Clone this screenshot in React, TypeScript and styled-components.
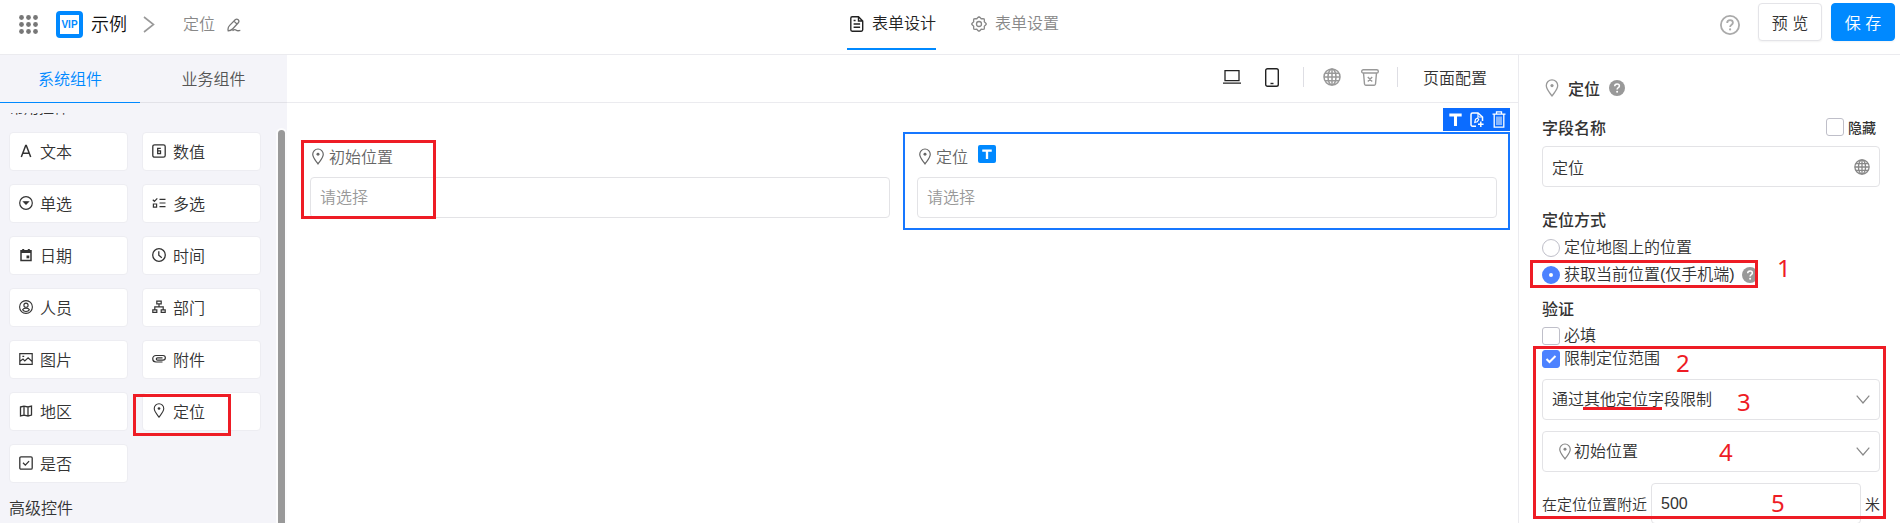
import React from "react";
import styled, { createGlobalStyle, css } from "styled-components";

const GlobalStyle = createGlobalStyle`
  * { box-sizing: border-box; }
  html, body { margin: 0; padding: 0; }
  body, button, input, select {
    font-family: "Liberation Sans", "Noto Sans CJK SC", sans-serif;
    font-size: 16px;
    font-weight: 350;
    color: #333;
  }
  button { cursor: pointer; padding: 0; border: 0; background: none; }
  h1, h2, h3, p { margin: 0; }
  svg { display: block; flex: none; }
`;

/* ---------- icons ---------- */

const Icon = ({
  w = 16,
  h,
  box = "0 0 16 16",
  sw = 1.3,
  children,
}: {
  w?: number;
  h?: number;
  box?: string;
  sw?: number;
  children: React.ReactNode;
}) => (
  <svg
    width={w}
    height={h ?? w}
    viewBox={box}
    fill="none"
    stroke="currentColor"
    strokeWidth={sw}
    aria-hidden="true"
  >
    {children}
  </svg>
);

const AppsIcon = () => (
  <Icon w={19} box="0 0 19 19">
    {[2.5, 9.5, 16.5].map((y) =>
      [2.5, 9.5, 16.5].map((x) => (
        <circle key={`${x}-${y}`} cx={x} cy={y} r="2.4" fill="currentColor" stroke="none" />
      ))
    )}
  </Icon>
);

const PinIcon = ({ w = 12, h = 17 }: { w?: number; h?: number }) => (
  <Icon w={w} h={h} box="0 0 13 18">
    <path d="M6.5 17C4.2 13.6.8 10.5.8 6.6a5.7 5.7 0 0 1 11.4 0c0 3.9-3.4 7-5.700 10.400Z" />
    <circle cx="6.5" cy="6.600" r="1.600" fill="currentColor" stroke="none" />
  </Icon>
);

const GlobeIcon = ({ size = 18 }: { size?: number }) => (
  <Icon w={size} box="0 0 18 18" sw={1.5}>
    <circle cx="9" cy="9" r="8" />
    <ellipse cx="9" cy="9" rx="4" ry="8" />
    <path d="M9 1v16M1 9h16M2 5.2h14M2 12.8h14" />
  </Icon>
);

const QuestionIcon = ({ size = 16 }: { size?: number }) => (
  <Icon w={size}>
    <circle cx="8" cy="8" r="8" fill="#999" stroke="none" />
    <path d="M5.7 6.3c0-1.4 1-2.3 2.4-2.3s2.3.9 2.3 2c0 1.6-2.3 1.7-2.3 3.4" stroke="#fff" strokeWidth="1.5" />
    <circle cx="8.1" cy="11.8" r="1" fill="#fff" stroke="none" />
  </Icon>
);

const HelpIcon = () => (
  <Icon w={20} box="0 0 20 20" sw={1.8}>
    <circle cx="10" cy="10" r="9.1" />
    <path d="M7.2 8c0-1.7 1.2-2.8 2.9-2.8s2.8 1.1 2.8 2.500c0 2-2.800 2-2.800 4.300" />
    <circle cx="10.1" cy="14.4" r="1.1" fill="currentColor" stroke="none" />
  </Icon>
);

const ChevronRight = () => (
  <Icon w={12} h={17} box="0 0 12 17" sw={1.6}>
    <path d="M1 1l9.500 7.500L1 16" stroke="#999" />
  </Icon>
);

const ChevronDown = () => (
  <Icon w={14} h={9} box="0 0 14 9" sw={1.2}>
    <path d="M.7.7L7 8l6.300-7.300" />
  </Icon>
);

const EditIcon = () => (
  <Icon w={14} box="0 0 14 14" sw={1.3}>
    <path d="M1.200 12.800c-.500-2 .1-4 1.500-5.400L8.200 1.700a2.200 2.200 0 0 1 3.100 3.100L5.800 10.700c-1.200 1.300-2.800 2-4.600 2.100ZM7.400 3.600l2.300 2.200M5.500 12.800c1.600-1.400 2.800-1.400 3.800-.600.800.7 2.200.7 4 .2" />
  </Icon>
);

const DocIcon = () => (
  <Icon w={14} h={16} box="0 0 14 16" sw={1.4}>
    <path d="M8.500.8H2.200C1.400.8.8 1.400.8 2.200v11.600c0 .8.6 1.400 1.400 1.400h9.100c.8 0 1.400-.6 1.400-1.400V5L8.500.8ZM8.500.8V5h4.200M3.600 4.500h2M3.600 8h6.500M3.600 11.300h6.500" />
  </Icon>
);

const gearOutline = Array.from({ length: 32 }, (_, i) => {
  const angle = (i / 32) * Math.PI * 2;
  const radius = 6.5 + 0.8 * Math.cos(angle * 8);
  return `${i ? "L" : "M"}${(8 + radius * Math.cos(angle)).toFixed(2)} ${(
    8 +
    radius * Math.sin(angle)
  ).toFixed(2)}`;
}).join("");

const GearIcon = () => (
  <Icon w={16} sw={1.3}>
    <path d={`${gearOutline}Z`} strokeLinejoin="round" />
    <circle cx="8" cy="8" r="2.500" />
  </Icon>
);

const LaptopIcon = () => (
  <Icon w={18} h={14} box="0 0 18 14" sw={1.3}>
    <path d="M2 .7h14v10H2ZM0 13.200h18" />
  </Icon>
);

const PhoneIcon = () => (
  <Icon w={14} h={19} box="0 0 14 19" sw={1.4}>
    <rect x=".7" y=".7" width="12.600" height="17.600" rx="1.800" />
    <path d="M5.500 15.500h3" />
  </Icon>
);

const RecycleIcon = () => (
  <Icon w={18} h={17} box="0 0 18 17" sw={1.4}>
    <rect x=".7" y=".7" width="16.600" height="3.300" rx="1.600" />
    <path d="M2.500 4l1 11c.1.8.5 1.200 1.200 1.200h8.600c.7 0 1.100-.4 1.200-1.200l1-11M6.800 8l4.400 4.400M11.200 8l-4.400 4.400" />
  </Icon>
);

const CopyIcon = () => (
  <Icon w={14} h={16} box="0 0 14 16" sw={1.5}>
    <path d="M6 14.200H2.500A1.500 1.500 0 0 1 1 12.700V2.500A1.500 1.500 0 0 1 2.500 1H8l4.500 4v4" />
    <path d="M8 1v4h4M4.800 10.500l.7-3.200 2-1.300 1.200 1.500-1.500 2.300Z" strokeWidth="1.200" />
    <path d="M10.800 9.500v5.500M8 12.300h5.600" strokeWidth="1.500" />
  </Icon>
);

const TrashIcon = () => (
  <Icon w={14} h={17} box="0 0 14 17" sw={1.3}>
    <path d="M.5 3.200h13M4.500 3V.8h5V3M2.200 3.500v12.700h9.600V3.500" />
    <path d="M5 5.500v8.500M7 5.500v8.500M9 5.500v8.500" strokeWidth="1" />
  </Icon>
);

const LetterTIcon = ({ size = 13 }: { size?: number }) => (
  <Icon w={size} box="0 0 12 12" sw={2.8}>
    <path d="M.3 1.900h11.400M6 1.500V12" />
  </Icon>
);

const LetterAIcon = () => (
  <Icon w={14} box="0 0 14 14" sw={1.5}>
    <path d="M2.300 13 6.700 1.500h.6L11.700 13M3.700 9.300h6.600" />
  </Icon>
);
const NumberIcon = () => (
  <Icon w={14} box="0 0 14 14" sw={1.3}>
    <rect x=".8" y=".8" width="12.400" height="12.400" rx="1.800" />
    <path d="M8.800 4.300H5.700v5.300h2.800V6.900H5.700" />
  </Icon>
);
const RadioIcon = () => (
  <Icon w={14} box="0 0 14 14" sw={1.2}>
    <circle cx="7" cy="7" r="6.300" />
    <path d="M4.700 5.800h4.600L7 8.200Z" fill="currentColor" />
  </Icon>
);
const ChecksIcon = () => (
  <Icon w={14} box="0 0 14 14" sw={1.2}>
    <path d="M.8 3.800l1.600 1.500L5.300 2.300M1.400 8h3.200v3.200H1.400ZM7.500 3.300h6M7.500 7h6M7.500 10.700h6" />
  </Icon>
);
const DateIcon = () => (
  <Icon w={14} box="0 0 14 14" sw={1.5}>
    <path d="M2 2.800h10v9.700H2Z" />
    <path d="M2 4h10M4.200 1v2.500M9.800 1v2.500" strokeWidth="2" />
    <path d="M7.500 7.500h2.800v2.800H7.500Z" fill="currentColor" stroke="none" />
  </Icon>
);
const ClockIcon = () => (
  <Icon w={14} box="0 0 14 14" sw={1.3}>
    <circle cx="7" cy="7" r="6.300" />
    <path d="M6.800 3.300v4l3 2.400" />
  </Icon>
);
const PersonIcon = () => (
  <Icon w={14} box="0 0 14 14" sw={1.1}>
    <circle cx="7" cy="7" r="6.400" />
    <circle cx="7" cy="5.200" r="2.100" />
    <path d="M3.600 9.700c.7-1.200 2-1.600 3.400-1.600s2.700.4 3.400 1.600c-.6 1.300-2 1.800-3.400 1.800s-2.800-.5-3.400-1.800Z" />
  </Icon>
);
const DeptIcon = () => (
  <Icon w={14} box="0 0 14 14" sw={1.2}>
    <path d="M4.800 1.200h4.400v2.600H4.800ZM.8 9.800h4v2.600h-4ZM9.200 9.800h4v2.600h-4ZM7 3.800v3M2.800 9.800v-3h8.400v3" />
  </Icon>
);
const ImageIcon = () => (
  <Icon w={14} box="0 0 14 14" sw={1.2}>
    <path d="M.8 1.600h12.400v10.800H.8ZM1 9.300l3-2.300 1.800 2 3.300-3.200 4 3.700M3.400 4.300h1.800" />
  </Icon>
);
const ClipIcon = () => (
  <Icon w={14} box="0 0 14 14" sw={1.2}>
    <path d="M10.500 10H4a3.200 3.200 0 0 1 0-6.500h7a2.300 2.300 0 0 1 0 4.700H5.500a1.200 1.200 0 0 1 0-2.400h5" />
  </Icon>
);
const MapIcon = () => (
  <Icon w={14} box="0 0 14 14" sw={1.3}>
    <path d="M1.500 3l3.500-.9 4 .9 3.500-.9v9L9 12l-4-.9-3.500.9ZM5 2.100v9M9 3v9" />
  </Icon>
);
const YesNoIcon = () => (
  <Icon w={14} box="0 0 14 14" sw={1.3}>
    <rect x=".8" y=".8" width="12.400" height="12.400" rx="1.200" />
    <path d="M4 6.800l2.300 2.300 3.800-4" />
  </Icon>
);

/* ---------- annotations laid over the interface ---------- */

type Box = { $x: number; $y: number; $w: number; $h: number };

const MarkBox = styled.span<Box>`
  position: absolute;
  left: ${(p) => p.$x}px;
  top: ${(p) => p.$y}px;
  width: ${(p) => p.$w}px;
  height: ${(p) => p.$h}px;
  border: 3px solid #ee1c25;
  pointer-events: none;
`;

const MarkLine = styled.span`
  position: absolute;
  left: 41px;
  top: 28px;
  width: 79px;
  height: 3px;
  background: #ee1c25;
`;

const MarkNumber = styled.span<{ $x: number; $y: number }>`
  position: absolute;
  left: ${(p) => p.$x}px;
  top: ${(p) => p.$y}px;
  font-family: "Noto Sans", sans-serif;
  font-size: 24px;
  font-weight: 400;
  line-height: 24px;
  color: #ee1c25;
  pointer-events: none;
`;

/* ---------- page frame ---------- */

const Page = styled.div`
  display: flex;
  flex-direction: column;
  height: 100vh;
  overflow: hidden;
  background: #fff;
`;

const Header = styled.header`
  display: grid;
  grid-template-columns: 1fr auto 1fr;
  flex: none;
  height: 55px;
  border-bottom: 1px solid #ebebef;
`;

const Brand = styled.div`
  display: flex;
  align-items: center;
  height: 49px;
  padding-left: 19px;
  color: #777;
`;

const Logo = styled.span`
  display: flex;
  align-items: center;
  justify-content: center;
  width: 27px;
  height: 27px;
  margin: 0 8px 0 18px;
  border: 4px solid #0089ff;
  border-radius: 4px;
  background: #fff;
  color: #0089ff;
  font-size: 10px;
  font-weight: 700;
`;

const AppName = styled.h1`
  margin-right: 16px;
  font-size: 18px;
  font-weight: 350;
  line-height: 24px;
  color: #111;
`;

const Crumb = styled.span`
  margin: 0 12px 0 28px;
  line-height: 24px;
  color: #888;
`;

const IconButton = styled.button`
  display: flex;
  color: inherit;
`;

const MainTabs = styled.nav`
  display: flex;
  gap: 32px;
  padding-left: 6px;
`;

const MainTab = styled.a<{ $active?: boolean }>`
  display: flex;
  align-items: center;
  gap: 8px;
  height: 50px;
  padding-left: 3px;
  border-bottom: 2px solid ${(p) => (p.$active ? "#0089ff" : "transparent")};
  color: ${(p) => (p.$active ? "#222" : "#888")};
  line-height: 24px;
  text-decoration: none;
`;

const Actions = styled.div`
  display: flex;
  justify-content: flex-end;
  gap: 9px;
  padding: 3px 5px 0 0;
`;

const HelpButton = styled(IconButton)`
  align-items: center;
  height: 44px;
  margin-right: 9px;
  color: #aaa;
`;

const ActionButton = styled.button<{ $primary?: boolean }>`
  width: 64px;
  height: 38px;
  border: 1px solid #e4e4e8;
  border-radius: 4px;
  background: #fff;
  box-shadow: 0 1px 2px rgba(0, 0, 0, 0.05);
  ${(p) =>
    p.$primary &&
    css`
      border-color: #0089ff;
      background: #0089ff;
      color: #fff;
    `}
`;

const Body = styled.div`
  display: flex;
  flex: 1;
  min-height: 0;
`;

/* ---------- left sidebar ---------- */

const Sidebar = styled.aside`
  display: flex;
  flex-direction: column;
  flex: none;
  width: 287px;
  background: #f4f4f9;
`;

const SideTabs = styled.div`
  display: grid;
  grid-template-columns: 140px 1fr;
  flex: none;
`;

const SideTab = styled.button<{ $active?: boolean }>`
  height: 48px;
  padding-bottom: 2px;
  border-bottom: 1px solid ${(p) => (p.$active ? "#0089ff" : "#e2e2e8")};
  color: ${(p) => (p.$active ? "#0089ff" : "#555")};
`;

const SideScroll = styled.div`
  display: flex;
  flex: 1;
  justify-content: space-between;
  min-height: 0;
  overflow: hidden;
  padding-top: 10px;
`;

const Palette = styled.div`
  padding-left: 9px;
`;

const ClippedTitle = styled.p`
  display: flex;
  align-items: flex-end;
  height: 3px;
  overflow: hidden;
  font-size: 15px;
  line-height: 16px;
`;

const Cards = styled.div`
  display: grid;
  grid-template-columns: 119px 119px;
  gap: 13px 14px;
  margin-top: 16px;
`;

const Card = styled.button`
  position: relative;
  display: flex;
  align-items: center;
  gap: 7px;
  height: 39px;
  padding: 0 0 2px 9px;
  border: 1px solid #ededf2;
  border-radius: 4px;
  background: #fff;
`;

const GroupTitle = styled.p`
  margin-top: 14px;
  line-height: 24px;
`;

const Track = styled.div`
  display: flex;
  width: 11px;
  margin-top: 15px;
  padding: 2px 2px 0;
  border-radius: 6px 6px 0 0;
  background: #fcfcfd;
`;

const Thumb = styled.div`
  flex: 1;
  border-radius: 4px 4px 0 0;
  background: #999;
`;

/* ---------- canvas ---------- */

const Canvas = styled.main`
  flex: 1;
  min-width: 0;
`;

const Toolbar = styled.div`
  display: flex;
  align-items: center;
  justify-content: flex-end;
  height: 48px;
  padding: 0 31px 3px 0;
  border-bottom: 1px solid #ebebef;
`;

const ToolGroup = styled.div<{ $muted?: boolean }>`
  display: flex;
  align-items: center;
  gap: ${(p) => (p.$muted ? 20 : 24)}px;
  padding: 0 ${(p) => (p.$muted ? 18 : 24)}px 0 ${(p) => (p.$muted ? 19 : 24)}px;
  border-right: 1px solid #dedee4;
  height: 20px;
  color: ${(p) => (p.$muted ? "#999" : "#222")};
`;

const ConfigButton = styled.button`
  padding-left: 25px;
`;

const Fields = styled.div`
  display: grid;
  grid-template-columns: 1fr 1fr;
  padding: 29px 8px 0 9px;
`;

const Field = styled.section<{ $selected?: boolean }>`
  position: relative;
  height: 98px;
  padding: 10px 11px 0 12px;
  border: 2px solid ${(p) => (p.$selected ? "#1677ff" : "transparent")};
`;

const FieldLabel = styled.label`
  display: flex;
  align-items: center;
  gap: 5px;
  height: 24px;
  padding-left: 2px;
  color: #666;
`;

const Badge = styled.span`
  display: flex;
  align-items: center;
  justify-content: center;
  width: 18px;
  height: 18px;
  margin: 0 0 4px 5px;
  border-radius: 2px;
  background: #0089ff;
  color: #fff;
`;

const TextBox = styled.input`
  width: 100%;
  height: 41px;
  padding: 0 9px;
  border: 1px solid #e3e3e6;
  border-radius: 4px;
  background: #fff;
  outline: none;
  &::placeholder {
    color: #999;
    opacity: 1;
  }
`;

const FieldInput = styled(TextBox)`
  display: block;
  margin-top: 9px;
`;

const FieldTools = styled.div`
  position: absolute;
  right: -2px;
  top: -26px;
  display: flex;
  align-items: center;
  justify-content: space-between;
  width: 67px;
  height: 23px;
  padding: 0 4px 0 6px;
  background: #0b6cff;
  color: #fff;
`;

/* ---------- property panel ---------- */

const Panel = styled.aside`
  flex: none;
  width: 382px;
  padding: 21px 20px 0 23px;
  border-left: 1px solid #ebebef;
`;

const PanelTitle = styled.h2`
  display: flex;
  align-items: center;
  gap: 9px;
  height: 24px;
  padding-left: 3px;
  font-size: 16px;
  font-weight: 500;
`;

const Muted = styled.span`
  display: flex;
  color: #999;
`;

const LabelRow = styled.div`
  display: flex;
  align-items: center;
  justify-content: space-between;
  height: 24px;
  margin: 15px 0 7px;
`;

const Strong = styled.label`
  font-weight: 500;
`;

const HideOption = styled.label`
  display: flex;
  align-items: center;
  gap: 4px;
  margin-right: 4px;
  font-size: 14px;
  font-weight: 500;
`;

const Group = styled.div`
  position: relative;
`;

const GroupHeading = styled.h3<{ $gap: number }>`
  padding: ${(p) => p.$gap}px 0 2px;
  font-size: 16px;
  line-height: 24px;
  font-weight: 500;
`;

const Option = styled.label<{ $h: number }>`
  display: flex;
  align-items: center;
  gap: 4px;
  height: ${(p) => p.$h}px;
  line-height: 22px;
`;

const Check = styled.input`
  appearance: none;
  flex: none;
  width: 18px;
  height: 18px;
  margin: 0;
  border: 1px solid #bfbfc9;
  border-radius: 3px;
  background: #fff;
  &:checked {
    border-color: #4d82ff;
    background: #4d82ff
      url("data:image/svg+xml,%3Csvg xmlns='http://www.w3.org/2000/svg' viewBox='0 0 18 18' fill='none' stroke='white' stroke-width='2'%3E%3Cpath d='M4.500 9l3 3 6-6'/%3E%3C/svg%3E")
      center / 18px no-repeat;
  }
`;

const Radio = styled.input`
  appearance: none;
  flex: none;
  width: 18px;
  height: 18px;
  margin: 0;
  border: 1px solid #bfbfc9;
  border-radius: 50%;
  background: #fff;
  &:checked {
    border: 7px solid #4d82ff;
  }
`;

const Tip = styled.span`
  margin-left: 3px;
`;

const Control = styled.div`
  position: relative;
  display: flex;
  align-items: center;
`;

const Stack = styled.div`
  display: flex;
  flex-direction: column;
  gap: 11px;
  margin-top: 9px;
`;

const Select = styled.select<{ $indent?: boolean }>`
  appearance: none;
  width: 100%;
  height: 41px;
  padding: 0 40px 0 ${(p) => (p.$indent ? 31 : 9)}px;
  border: 1px solid #e3e3e6;
  border-radius: 4px;
  background: #fff;
  outline: none;
`;

const Adornment = styled.span<{ $left?: boolean }>`
  position: absolute;
  ${(p) => (p.$left ? "left: 17px;" : "right: 10px;")}
  display: flex;
  color: #888;
  pointer-events: none;
`;

const RangeRow = styled.div`
  display: flex;
  align-items: center;
  gap: 4px;
  white-space: nowrap;
  font-size: 15px;
`;

const palette: [string, React.ReactNode][] = [
  ["文本", <LetterAIcon />],
  ["数值", <NumberIcon />],
  ["单选", <RadioIcon />],
  ["多选", <ChecksIcon />],
  ["日期", <DateIcon />],
  ["时间", <ClockIcon />],
  ["人员", <PersonIcon />],
  ["部门", <DeptIcon />],
  ["图片", <ImageIcon />],
  ["附件", <ClipIcon />],
  ["地区", <MapIcon />],
  ["定位", <PinIcon w={14} h={15} />],
  ["是否", <YesNoIcon />],
];

export default function App() {
  return (
    <Page>
      <GlobalStyle />
      <Header>
        <Brand>
          <IconButton aria-label="应用">
            <AppsIcon />
          </IconButton>
          <Logo>VIP</Logo>
          <AppName>示例</AppName>
          <ChevronRight />
          <Crumb>定位</Crumb>
          <IconButton aria-label="编辑">
            <EditIcon />
          </IconButton>
        </Brand>
        <MainTabs>
          <MainTab href="#design" $active>
            <DocIcon />
            表单设计
          </MainTab>
          <MainTab href="#settings">
            <GearIcon />
            表单设置
          </MainTab>
        </MainTabs>
        <Actions>
          <HelpButton aria-label="帮助">
            <HelpIcon />
          </HelpButton>
          <ActionButton>预 览</ActionButton>
          <ActionButton $primary>保 存</ActionButton>
        </Actions>
      </Header>

      <Body>
        <Sidebar>
          <SideTabs>
            <SideTab $active>系统组件</SideTab>
            <SideTab>业务组件</SideTab>
          </SideTabs>
          <SideScroll>
            <Palette>
              <ClippedTitle>常用控件</ClippedTitle>
              <Cards>
                {palette.map(([name, icon]) => (
                  <Card key={name}>
                    {icon}
                    {name}
                    {name === "定位" && <MarkBox $x={-10} $y={1} $w={98} $h={42} />}
                  </Card>
                ))}
              </Cards>
              <GroupTitle>高级控件</GroupTitle>
            </Palette>
            <Track>
              <Thumb />
            </Track>
          </SideScroll>
        </Sidebar>

        <Canvas>
          <Toolbar>
            <ToolGroup>
              <IconButton aria-label="电脑端">
                <LaptopIcon />
              </IconButton>
              <IconButton aria-label="手机端">
                <PhoneIcon />
              </IconButton>
            </ToolGroup>
            <ToolGroup $muted>
              <IconButton aria-label="语言">
                <GlobeIcon />
              </IconButton>
              <IconButton aria-label="回收站">
                <RecycleIcon />
              </IconButton>
            </ToolGroup>
            <ConfigButton>页面配置</ConfigButton>
          </Toolbar>
          <Fields>
            <Field>
              <FieldLabel htmlFor="start">
                <PinIcon />
                初始位置
              </FieldLabel>
              <FieldInput id="start" placeholder="请选择" />
              <MarkBox $x={3} $y={6} $w={135} $h={79} />
            </Field>
            <Field $selected>
              <FieldLabel htmlFor="place">
                <PinIcon />
                定位
                <Badge>
                  <LetterTIcon size={10} />
                </Badge>
              </FieldLabel>
              <FieldInput id="place" placeholder="请选择" />
              <FieldTools>
                <IconButton aria-label="标题">
                  <LetterTIcon />
                </IconButton>
                <IconButton aria-label="复制">
                  <CopyIcon />
                </IconButton>
                <IconButton aria-label="删除">
                  <TrashIcon />
                </IconButton>
              </FieldTools>
            </Field>
          </Fields>
        </Canvas>

        <Panel>
          <PanelTitle>
            <Muted>
              <PinIcon w={14} h={18} />
            </Muted>
            定位
            <QuestionIcon />
          </PanelTitle>
          <LabelRow>
            <Strong htmlFor="name">字段名称</Strong>
            <HideOption>
              <Check type="checkbox" />
              隐藏
            </HideOption>
          </LabelRow>
          <Control>
            <TextBox id="name" defaultValue="定位" />
            <Adornment>
              <GlobeIcon size={16} />
            </Adornment>
          </Control>

          <Group role="radiogroup" aria-labelledby="mode-title">
            <GroupHeading id="mode-title" $gap={22}>
              定位方式
            </GroupHeading>
            <Option $h={26}>
              <Radio type="radio" name="mode" />
              定位地图上的位置
            </Option>
            <Option $h={28}>
              <Radio type="radio" name="mode" defaultChecked />
              获取当前位置(仅手机端)
              <Tip>
                <QuestionIcon />
              </Tip>
            </Option>
            <MarkBox $x={-12} $y={73} $w={228} $h={28} />
            <MarkNumber $x={235} $y={69}>1</MarkNumber>
          </Group>

          <Group role="group" aria-labelledby="check-title">
            <GroupHeading id="check-title" $gap={9}>
              验证
            </GroupHeading>
            <Option $h={24}>
              <Check type="checkbox" />
              必填
            </Option>
            <Option $h={22}>
              <Check type="checkbox" defaultChecked />
              限制定位范围
            </Option>
            <Stack>
              <Control>
                <Select aria-label="限制方式">
                  <option>通过其他定位字段限制</option>
                </Select>
                <Adornment>
                  <ChevronDown />
                </Adornment>
                <MarkLine />
              </Control>
              <Control>
                <Select $indent aria-label="定位字段">
                  <option>初始位置</option>
                </Select>
                <Adornment $left>
                  <PinIcon />
                </Adornment>
                <Adornment>
                  <ChevronDown />
                </Adornment>
              </Control>
              <RangeRow>
                <label htmlFor="range">在定位位置附近</label>
                <TextBox id="range" defaultValue="500" />
                米
              </RangeRow>
            </Stack>
            <MarkBox $x={-9} $y={57} $w={353} $h={173} />
            <MarkNumber $x={134} $y={62}>2</MarkNumber>
            <MarkNumber $x={195} $y={101}>3</MarkNumber>
            <MarkNumber $x={177} $y={151}>4</MarkNumber>
            <MarkNumber $x={229} $y={202}>5</MarkNumber>
          </Group>
        </Panel>
      </Body>
    </Page>
  );
}
